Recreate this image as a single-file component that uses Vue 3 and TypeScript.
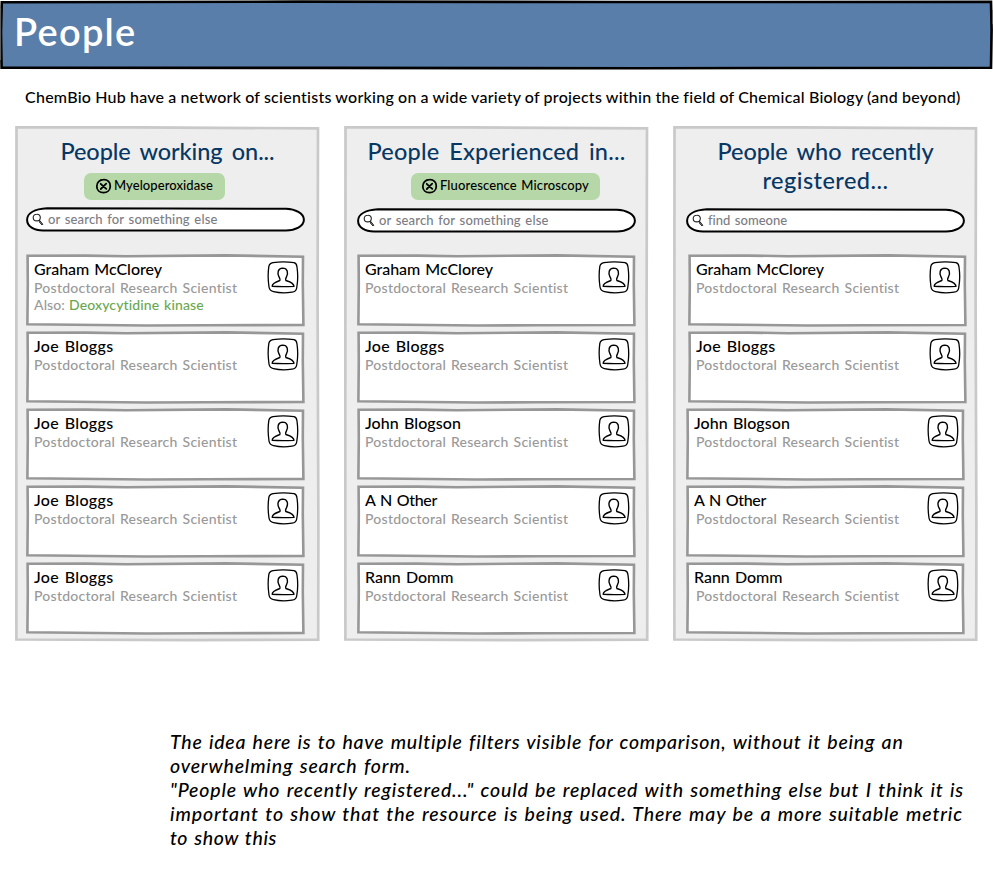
<script setup lang="ts">
interface Line {
  text: string
  width: number
}
interface Person {
  name: Line
  also?: Line
  shift?: boolean
}
interface Panel {
  key: string
  title: Line[]
  tag?: Line
  search: Line
  people: Person[]
}

const graham: Line = { text: 'Graham McClorey', width: 128 }
const joe: Line = { text: 'Joe Bloggs', width: 79.5 }
const john: Line = { text: 'John Blogson', width: 96 }
const other: Line = { text: 'A N Other', width: 72 }
const rann: Line = { text: 'Rann Domm', width: 88.5 }

const panels: Panel[] = [
  {
    key: 'working',
    title: [{ text: 'People working on...', width: 214 }],
    tag: { text: 'Myeloperoxidase', width: 99 },
    search: { text: 'or search for something else', width: 169.5 },
    people: [
      { name: graham, also: { text: 'Deoxycytidine kinase', width: 135 } },
      { name: joe },
      { name: joe },
      { name: joe },
      { name: joe },
    ],
  },
  {
    key: 'experienced',
    title: [{ text: 'People Experienced in...', width: 258 }],
    tag: { text: 'Fluorescence Microscopy', width: 149 },
    search: { text: 'or search for something else', width: 169.5 },
    people: [{ name: graham }, { name: joe }, { name: john }, { name: other }, { name: rann }],
  },
  {
    key: 'recent',
    title: [
      { text: 'People who recently', width: 216 },
      { text: 'registered...', width: 126 },
    ],
    search: { text: 'find someone', width: 79 },
    people: [
      { name: graham },
      { name: joe },
      { name: john, shift: true },
      { name: other, shift: true },
      { name: rann, shift: true },
    ],
  },
]

const notes: Line[] = [
  { text: 'The idea here is to have multiple filters visible for comparison, without it being an', width: 733 },
  { text: 'overwhelming search form.', width: 241 },
  { text: '"People who recently registered..." could be replaced with something else but I think it is', width: 794 },
  { text: 'important to show that the resource is being used. There may be a more suitable metric', width: 793 },
  { text: 'to show this', width: 107 },
]

// Spreads the letters of a single line over the given width.
const vFit = {
  mounted(el: HTMLElement, binding: { value: number }) {
    const count = (el.textContent ?? '').length
    const natural = el.getBoundingClientRect().width
    el.style.letterSpacing = `${(binding.value - natural) / count}px`
  },
}
</script>

<template>
  <div class="page">
    <header class="banner">
      <svg class="frame" width="993" height="70" viewBox="0 0 993 70" aria-hidden="true">
        <path d="M1.8 2.2 L300 1.6 L620 2 L991 1.9 L991.6 30 L991 67.8 L640 68.2 L320 67.9 L1.6 67.6 L1 32 Z" fill="#5a7eaa" stroke="#000" stroke-width="2.6" />
        <path d="M.6 8 V60 M992.6 10 V24" stroke="#666" stroke-width="1" />
      </svg>
      <h1 v-fit="122.5">People</h1>
    </header>

    <p class="intro">
      <span v-fit="935.5">ChemBio Hub have a network of scientists working on a wide variety of projects within the field of Chemical Biology (and beyond)</span>
    </p>

    <main class="panels">
      <section v-for="panel in panels" :key="panel.key" class="panel" :class="panel.key">
        <svg class="frame" width="305" height="516" viewBox="0 0 305 516" aria-hidden="true">
          <path d="M1.5 1.4 L120 1.3 L303 2.4 L302.6 180 L303.4 400 L303.2 513.6 L180 514.2 L1.4 513.5 L1.3 330 Z" fill="#eee" stroke="#c9c9c9" stroke-width="2.7" />
        </svg>
        <div class="head">
          <h2>
            <span v-for="line in panel.title" :key="line.text" v-fit="line.width">{{ line.text }}</span>
          </h2>
          <div v-if="panel.tag" class="tag">
            <svg width="17" height="17" viewBox="0 0 17 17" fill="none" stroke="#000" stroke-linecap="round" aria-hidden="true">
              <path d="M8.4 1.7 C12.6 1.4 15.5 4.4 15.3 8.2 C15.2 12.2 12.3 14.7 8.5 14.7 C4.5 14.7 1.9 12 1.8 8.4 C1.7 4.7 4.6 1.8 8.4 1.7 Z" stroke-width="1.8" />
              <path d="M5.7 5.8 Q8 8 11.3 10.9 M11.2 5.6 Q9 7.7 5.8 11" stroke-width="1.8" />
            </svg>
            <span v-fit="panel.tag.width">{{ panel.tag.text }}</span>
          </div>
        </div>

        <div class="search">
          <svg class="frame" width="279" height="25" viewBox="0 0 279 25" aria-hidden="true">
            <path d="M21 1.3 C90 .7 190 2.2 260 1.7 C269 2 278 6 277.9 12.8 C277.9 19.4 269 23.3 260 23.4 C180 23.3 90 24 17 23.5 C8 23.4 1.2 19.5 1.1 13 C1 6 9 2 21 1.3 Z" fill="#fff" stroke="#000" stroke-width="2" />
          </svg>
          <svg class="lens" width="12" height="14" viewBox="0 0 12 14" fill="none" stroke="#222" aria-hidden="true">
            <path d="M4.8 1.2 C7 1 8.4 2.5 8.3 4.5 C8.3 6.5 6.8 7.9 4.8 7.9 C2.6 7.9 1.2 6.5 1.2 4.5 C1.2 2.6 2.7 1.2 4.8 1.2 Z" stroke-width="1.1" />
            <path d="M7 7.2 L8.1 8.2" stroke-width="1.2" />
            <path d="M8.2 8 L10.8 11.3 L10 12 L7.3 8.9 Z" stroke-width="1" fill="#999" />
          </svg>
          <span v-fit="panel.search.width">{{ panel.search.text }}</span>
        </div>

        <ul class="list">
          <li v-for="(person, i) in panel.people" :key="i" class="card" :class="{ shift: person.shift }">
            <svg class="frame" width="279" height="73" viewBox="0 0 279 73" aria-hidden="true">
              <path d="M1.6 1.7 L60 1.6 L100 2.2 L200 1.4 L277 2.7 L276.8 30 L277.4 71 L180 71.3 L120 71.5 L1.4 70.2 L1.8 30 Z" fill="#fff" stroke="#979797" stroke-width="2.6" />
            </svg>
            <div class="details">
              <h3><span v-fit="person.name.width">{{ person.name.text }}</span></h3>
              <p class="role"><span v-fit="203.5">Postdoctoral Research Scientist</span></p>
              <p v-if="person.also" class="also">
                <span v-fit="31">Also:</span>
                <span v-fit="person.also.width" class="topic">{{ person.also.text }}</span>
              </p>
            </div>
            <svg class="avatar" width="32" height="33" viewBox="0 0 32 33" fill="none" stroke="#000" stroke-linejoin="round" aria-hidden="true">
              <path d="M6 1.6 C12 .8 21 .8 27 1.7 C29.5 2.3 29.8 4 30 6 C31 13 31 20 29.7 27 C29.3 30 27.5 30.8 25 31.2 C18 32.3 12 32 6.5 30.7 C3.7 30 2.5 28.8 2 26 C.9 19 .9 12 1.8 5.7 C2.2 3 3.4 2 6 1.6 Z" stroke-width="1.3" />
              <path d="M5.2 25.3 C5.1 22 9.2 20.8 12.9 19.5 C13.6 18.3 12.8 17.3 11.9 15.7 C10.2 12.3 10.6 7.3 15.6 7.1 C20.9 7.1 21.2 12 19.6 15.5 C18.8 17.3 18 18.3 18.9 19.5 C22.6 20.7 26.8 21.8 27 25.4 C20 25.7 12 25.8 5.2 25.3 Z" stroke-width="1.4" />
            </svg>
          </li>
        </ul>
      </section>
    </main>

    <div class="notes">
      <p v-for="line in notes" :key="line.text"><span v-fit="line.width">{{ line.text }}</span></p>
    </div>
  </div>
</template>

<style>
body {
  margin: 0;
  background: #fff;
}
</style>

<style scoped>
.page {
  width: 993px;
  height: 874px;
  overflow: hidden;
  font-family: Lato, "Liberation Sans", sans-serif;
  font-weight: 500;
  word-spacing: 0.07em;
  color: #000;
}
h1, h2, h3, p, ul {
  margin: 0;
  padding: 0;
  font-weight: inherit;
}
span, h1 {
  display: inline-block;
  white-space: nowrap;
}
.banner, .panel, .search, .card {
  position: relative;
  isolation: isolate;
}
.frame {
  position: absolute;
  top: 0;
  left: 0;
  z-index: -1;
}
.banner {
  height: 70px;
  padding-left: 14px;
}
h1 {
  font-size: 38px;
  font-weight: 600;
  line-height: 62px;
  color: #fff;
}
.intro {
  margin: 15px 0 0 25px;
  font-size: 16px;
  line-height: 24px;
  height: 41px;
  word-spacing: -0.02em;
}
.panels {
  display: flex;
  gap: 24px;
  padding-left: 15px;
}
.panel {
  box-sizing: border-box;
  width: 305px;
  height: 516px;
  padding: 11px 0 0;
}
.head {
  height: 71px;
}
h2 {
  display: flex;
  flex-direction: column;
  align-items: center;
  font-size: 23.5px;
  line-height: 29px;
  word-spacing: 0.15em;
  color: #073763;
}
.tag {
  display: flex;
  align-items: center;
  gap: 2px;
  box-sizing: border-box;
  width: 141px;
  height: 27px;
  margin: 7px 0 0 69px;
  padding: 0 0 0 11px;
  border-radius: 7px;
  background: #b6d7a8;
  font-size: 13px;
}
.tag span {
  line-height: 25px;
  height: 27px;
}
.experienced .tag {
  width: 189px;
  margin-left: 67px;
  padding-left: 10px;
}
.search {
  display: flex;
  width: 279px;
  height: 25px;
  margin: 0 0 21px 13px;
  font-size: 13px;
  line-height: 24px;
  color: #7c7c84;
}
.lens {
  margin: 6px 4px 0 6px;
}
.working .head {
  height: 70px;
}
.working .search {
  margin: 0 0 22px 11px;
}
.list {
  display: grid;
  gap: 4px;
  margin-left: 13px;
  list-style: none;
}
.working .list {
  margin-left: 11px;
}
.recent .list {
  margin-left: 15px;
}
.card {
  display: flex;
  justify-content: space-between;
  box-sizing: border-box;
  width: 279px;
  height: 73px;
  padding: 5px 6px 0 8px;
}
.card.shift {
  margin-left: -2px;
}
.shift .role {
  padding-left: 2px;
}
h3 {
  height: 20px;
  font-size: 16px;
  line-height: 20px;
}
.role, .also {
  height: 17px;
  font-size: 14px;
  line-height: 17px;
  color: #999;
}
.also {
  display: flex;
  gap: 4px;
}
.topic {
  color: #6aa84f;
}
.avatar {
  margin-top: 2px;
}
.notes {
  margin: 88px 0 0 170px;
  font-size: 19.5px;
  font-style: italic;
}
.notes p {
  height: 24px;
  line-height: 24px;
}
</style>
